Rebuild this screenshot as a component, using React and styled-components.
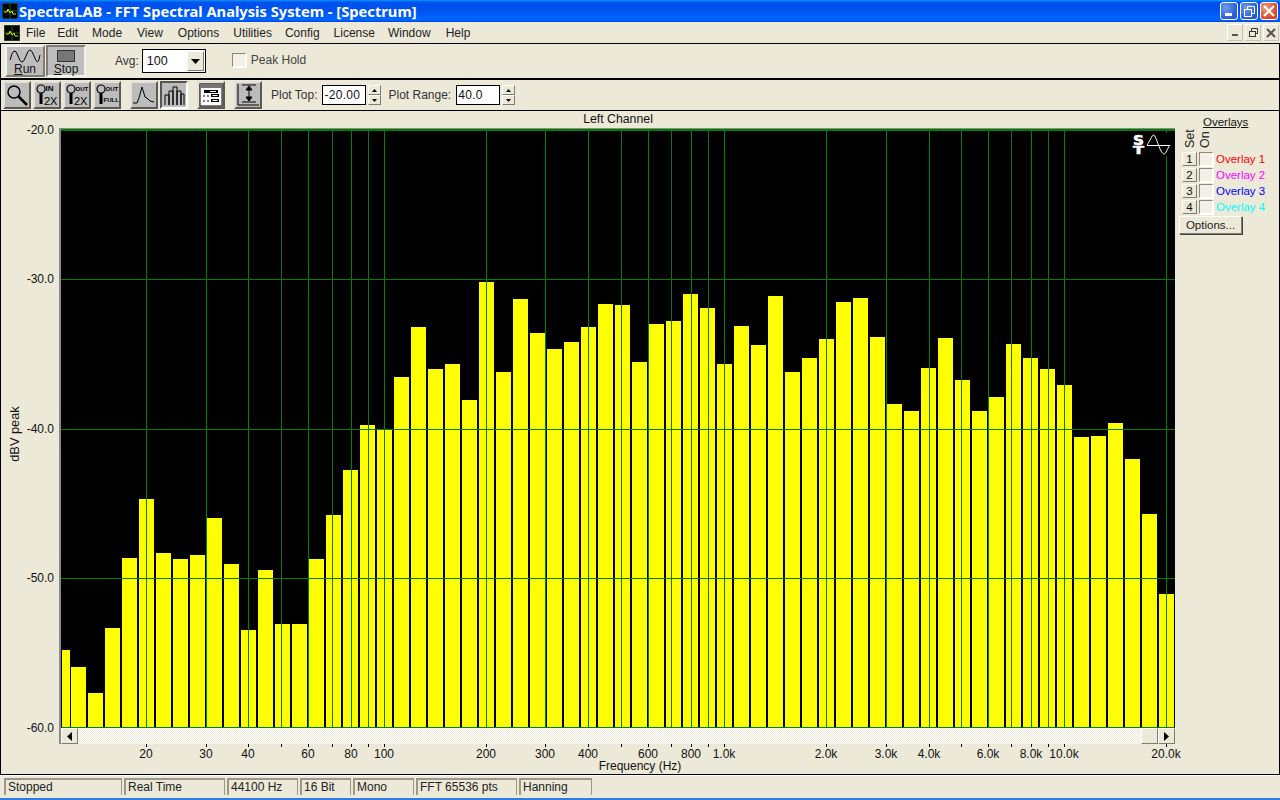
import React from 'react';
import styled, { createGlobalStyle } from 'styled-components';

const GlobalStyle = createGlobalStyle`
    html, body {
        margin: 0;
        padding: 0;
        width: 1280px;
        height: 800px;
        overflow: hidden;
        background: #ece9d8;
    }
    * {
        box-sizing: border-box;
    }
`;

const Window = styled.div`
    width: 1280px;
    height: 800px;
    display: flex;
    flex-direction: column;
    background: #ece9d8;
    font-family: "Liberation Sans", Arial, sans-serif;
    font-size: 12px;
    color: #000;
    overflow: hidden;
`;

const TitleBar = styled.div`
    height: 22px;
    flex: none;
    display: flex;
    align-items: center;
    padding: 0 2px;
    background: linear-gradient(180deg, #0997ff 0%, #0053ee 10%, #0050ee 40%, #0066ff 88%, #005bff 95%, #003dd7 100%);
`;

const TitleText = styled.div`
    flex: 1;
    margin-left: 1px;
    color: #fff;
    font-family: "Noto Sans", Verdana, sans-serif;
    font-weight: bold;
    font-size: 14.7px;
    white-space: nowrap;
`;

const CaptionButton = styled.div`
    width: 18px;
    height: 18px;
    margin-left: 2px;
    border: 1px solid #fff;
    border-radius: 3px;
    background: ${props => props.$close
        ? 'radial-gradient(circle at 30% 30%, #f0a080, #d8462a 70%)'
        : 'radial-gradient(circle at 30% 30%, #6f9cf0, #2a5ad8 70%)'};
    display: flex;
    align-items: center;
    justify-content: center;
`;

const MenuBar = styled.div`
    height: 21px;
    flex: none;
    display: flex;
    align-items: center;
    padding-left: 4px;
    border-bottom: 1px solid #000;
    box-sizing: content-box;
`;

const MenuItem = styled.span`
    margin-left: ${props => props.$gap}px;
    font-size: 12px;
    color: #222;
    white-space: nowrap;
`;

const MdiButtons = styled.div`
    margin-left: auto;
    display: flex;
    gap: 2px;
    padding-right: 1px;
`;

const MdiButton = styled.div`
    width: 16px;
    height: 17px;
    background: #ece9d8;
    border: 1px solid;
    border-color: #fff #c8c5b4 #c8c5b4 #fff;
    display: flex;
    align-items: center;
    justify-content: center;
`;

const ToolbarOne = styled.div`
    height: 34px;
    flex: none;
    display: flex;
    align-items: center;
    border-bottom: 2px solid #000;
    box-sizing: content-box;
    box-shadow: inset 1px 0 0 #000, inset -1px 0 0 #000;
    padding-left: 5px;
    font-size: 12px;
    color: #333;
`;

const RunButton = styled.div`
    width: 40px;
    height: 32px;
    margin-right: 1px;
    display: flex;
    flex-direction: column;
    align-items: center;
    background: #bdbdbd;
    border: 2px solid;
    border-color: ${props => props.$down
        ? '#7f7d73 #f4f2e8 #f4f2e8 #7f7d73'
        : '#f4f2e8 #7f7d73 #7f7d73 #f4f2e8'};
    color: #111;
    line-height: 12px;
    padding-top: 2px;
`;

const Underlined = styled.span`
    text-decoration: underline;
`;

const AvgLabel = styled.span`
    margin-left: 28px;
    margin-right: 3px;
`;

const ComboBox = styled.div`
    width: 64px;
    height: 24px;
    background: #fff;
    border: 1px solid #000;
    display: flex;
    align-items: center;
    justify-content: space-between;
    padding: 1px 1px 1px 4px;
    font-size: 12.5px;
    color: #111;
`;

const ComboArrow = styled.div`
    width: 17px;
    height: 20px;
    background: #ece9d8;
    border: 1px solid;
    border-color: #fff #7f7d73 #7f7d73 #fff;
    display: flex;
    align-items: center;
    justify-content: center;
`;

const CheckBox = styled.div`
    width: 14px;
    height: 14px;
    flex: none;
    background: #f3f1e7;
    border: 1px solid;
    border-color: #8a8878 #fff #fff #8a8878;
    box-shadow: 1px 1px 0 #fff;
`;

const PeakHold = styled.label`
    display: flex;
    align-items: center;
    gap: 5px;
    margin-left: 26px;
    margin-top: -2px;
    color: #444;
`;

const ToolbarTwo = styled.div`
    height: 30px;
    flex: none;
    display: flex;
    align-items: center;
    border-bottom: 1px solid #000;
    box-sizing: content-box;
    box-shadow: inset 1px 0 0 #000, inset -1px 0 0 #000;
    padding-left: 3px;
    color: #333;
    font-size: 12px;
`;

const IconButton = styled.div`
    width: 28px;
    height: 28px;
    margin-left: ${props => props.$gap || 0}px;
    flex: none;
    background: #bcbcbc;
    border: 2px solid;
    border-color: ${props => props.$down
        ? '#555 #fff #fff #555'
        : '#e4e2d8 #5c5a50 #5c5a50 #e4e2d8'};
    display: flex;
    align-items: center;
    justify-content: center;
`;

const FieldLabel = styled.span`
    margin-left: ${props => props.$gap}px;
    margin-right: 5px;
    white-space: nowrap;
`;

const NumberField = styled.div`
    width: 44px;
    height: 20px;
    background: #fff;
    border: 1px solid #000;
    display: flex;
    align-items: center;
    padding-left: 1px;
    font-size: 12px;
    letter-spacing: 0.3px;
    color: #111;
`;

const Spinner = styled.div`
    width: 13px;
    height: 20px;
    margin-left: 2px;
    display: flex;
    flex-direction: column;
`;

const SpinPart = styled.div`
    flex: 1;
    background: #ece9d8;
    border: 1px solid;
    border-color: #fff #7f7d73 #7f7d73 #fff;
    display: flex;
    align-items: center;
    justify-content: center;
`;

const Main = styled.div`
    flex: 1;
    min-height: 0;
    display: grid;
    grid-template-columns: 60px 1116px 1fr;
    grid-template-rows: 18px 599px 1fr;
    box-shadow: inset 1px 0 0 #000, inset -1px 0 0 #000;
`;

const ChannelTitle = styled.div`
    grid-column: 1 / 3;
    padding-left: 60px;
    text-align: center;
    font-size: 12.3px;
    line-height: 16px;
    color: #111;
`;

const YAxis = styled.div`
    grid-column: 1;
    grid-row: 2;
    position: relative;
`;

const YLabel = styled.span`
    position: absolute;
    right: 6px;
    top: ${props => props.$y - 7}px;
    font-size: 12px;
    line-height: 14px;
    color: #111;
`;

const YTitle = styled.span`
    position: absolute;
    left: 14px;
    top: 305px;
    transform: translate(-50%, -50%) rotate(-90deg);
    white-space: nowrap;
    font-size: 12.8px;
    color: #111;
`;

const PlotWrap = styled.div`
    grid-column: 2;
    grid-row: 2;
    position: relative;
    border-top: 1px solid #8a8a8a;
    border-left: 2px solid #8a8a8a;
    margin: -1px 1px 0 -1px;
    background: #000;
`;

const Plot = styled.svg`
    display: block;
`;

const SidePanel = styled.div`
    grid-column: 3;
    grid-row: 1 / 4;
    display: flex;
    flex-direction: column;
    position: relative;
    padding-left: 3px;
`;

const OverlaysTitle = styled.div`
    position: absolute;
    left: 27px;
    top: 5px;
    font-size: 11.5px;
    text-decoration: underline;
    color: #111;
`;

const SetOnHead = styled.div`
    height: 29px;
    margin: 8px 0 3px 4px;
    display: flex;
`;

const VerticalText = styled.span`
    width: 15px;
    writing-mode: vertical-rl;
    transform: rotate(180deg);
    font-size: 12.5px;
    line-height: 15px;
    text-align: left;
    color: #222;
`;

const OverlayRow = styled.div`
    height: 16px;
    display: flex;
    align-items: center;
    padding-left: 3px;
    font-size: 11.5px;
    color: ${props => props.$color};
    white-space: nowrap;
`;

const SetButton = styled.div`
    width: 15px;
    height: 14px;
    flex: none;
    margin-right: 2px;
    background: #ece9d8;
    border: 1px solid;
    border-color: #fff #7f7d73 #7f7d73 #fff;
    font-size: 11.5px;
    line-height: 12px;
    text-align: center;
    color: #111;
`;

const OverlayName = styled.span`
    margin-left: 3px;
`;

const OptionsButton = styled.div`
    width: 63px;
    height: 18px;
    margin-top: 1px;
    background: #ece9d8;
    border: 1px solid;
    border-color: #fff #7f7d73 #7f7d73 #fff;
    box-shadow: 1px 1px 0 #444;
    font-size: 11.5px;
    line-height: 16px;
    text-align: center;
    color: #222;
`;

const XAxis = styled.div`
    grid-column: 1 / 3;
    grid-row: 3;
    position: relative;
`;

const ScrollRow = styled.div`
    position: absolute;
    left: 59px;
    top: 0;
    width: 1116px;
    height: 16px;
    display: flex;
    background-color: #f4f2ea;
    background-image: repeating-conic-gradient(#ece9d8 0 25%, #fff 0 50%);
    background-size: 2px 2px;
    border-left: 2px solid #8a8a8a;
`;

const ScrollButton = styled.div`
    width: 17px;
    height: 16px;
    margin-left: ${props => props.$auto ? 'auto' : '0'};
    background: #ece9d8;
    border: 1px solid;
    border-color: #fff #7f7d73 #7f7d73 #fff;
    display: flex;
    align-items: center;
    justify-content: center;
`;

const Tick = styled.i`
    position: absolute;
    left: ${props => props.$x}px;
    top: 16px;
    width: 1px;
    height: 3px;
    background: #000;
`;

const XLabel = styled.span`
    position: absolute;
    left: ${props => props.$x}px;
    top: 20px;
    transform: translateX(-50%);
    font-size: 12px;
    line-height: 12px;
    color: #111;
    white-space: nowrap;
`;

const XTitle = styled.span`
    position: absolute;
    left: 640px;
    top: 32px;
    transform: translateX(-50%);
    font-size: 12px;
    line-height: 12px;
    color: #111;
`;

const StatusBar = styled.div`
    height: 24px;
    flex: none;
    display: flex;
    align-items: flex-start;
    gap: 2px;
    border-top: 1px solid #000;
    box-shadow: inset 0 1px 0 #fff;
    padding: 3px 0 0 4px;
`;

const StatusCell = styled.div`
    width: ${props => props.$w}px;
    height: 17px;
    padding-left: 2px;
    border-style: solid;
    border-color: #9a9888;
    border-width: 2px 1px 0 2px;
    font-size: 12px;
    line-height: 14px;
    color: #222;
    white-space: nowrap;
`;

const BottomEdge = styled.div`
    height: 2px;
    flex: none;
    background: #2f7be0;
`;

const menus = [
    ['File', 6], ['Edit', 12], ['Mode', 14], ['View', 15], ['Options', 15],
    ['Utilities', 14], ['Config', 13], ['License', 14], ['Window', 13], ['Help', 15],
];

const barTops = [
    650, 667, 693, 628, 558, 499, 553, 559, 555, 518, 564, 630, 570, 624, 624, 559, 515,
    470, 425, 430, 377, 327, 369, 364, 400, 282, 372, 299, 333, 349, 342, 327, 304, 305,
    362, 324, 321, 294, 308, 364, 326, 345, 296, 372, 358, 339, 302, 298, 337, 404, 411,
    368, 338, 380, 411, 397, 344, 358, 369, 385, 437, 436, 423, 459, 514, 594,
];

const greenLines = [146, 206, 248, 308, 351, 384, 486, 545, 588, 648, 691, 724, 826, 886, 929, 988, 1031, 1064, 1166];
const minorLines = [281, 332, 368, 621, 671, 708, 961, 1011, 1048];
const gridRows = [279, 429, 578];

const xLabels = [
    ['20', 146], ['30', 206], ['40', 248], ['60', 308], ['80', 351], ['100', 384],
    ['200', 486], ['300', 545], ['400', 588], ['600', 648], ['800', 691], ['1.0k', 724],
    ['2.0k', 826], ['3.0k', 886], ['4.0k', 929], ['6.0k', 988], ['8.0k', 1031], ['10.0k', 1064], ['20.0k', 1166],
];

const overlays = [
    ['1', 'Overlay 1', '#ff0000'],
    ['2', 'Overlay 2', '#ff00ff'],
    ['3', 'Overlay 3', '#0000ff'],
    ['4', 'Overlay 4', '#00ffff'],
];

const statusCells = [
    ['Stopped', 118], ['Real Time', 101], ['44100 Hz', 71], ['16 Bit', 51],
    ['Mono', 61], ['FFT 65536 pts', 101], ['Hanning', 73],
];

// plot svg coordinates start at page x=61, y=129
const PX = 61;
const PY = 129;
const PLOT_W = 1114;
const PLOT_H = 599;

const AppIcon = () => (
    <svg width="16" height="16" viewBox="0 0 16 16">
        <rect width="16" height="16" fill="#000" stroke="#4a7a30" />
        <path d="M1 8H15M8 1V15" stroke="#0a6a0a" />
        <path d="M2 9h3l1-3 2 4 2-2 1 3h3" stroke="#f0e000" fill="none" />
    </svg>
);

const SpectrumPlot = () => (
    <Plot width={PLOT_W} height={PLOT_H} viewBox={`0 0 ${PLOT_W} ${PLOT_H}`} shapeRendering="crispEdges">
        {barTops.map((top, i) => {
            const x = i === 0 ? 1 : 10 + (i - 1) * 17;
            const w = i === 0 ? 8 : 15;
            return <rect key={i} x={x} y={top - PY} width={w} height={PLOT_H - (top - PY)} fill="#ffff00" />;
        })}
        {greenLines.map(x => (
            <rect key={x} x={x - PX} y="0" width="1" height={PLOT_H} fill="#008000" />
        ))}
        {minorLines.map(x => (
            <rect key={x} x={x - PX} y="0" width="1" height={PLOT_H} fill="#1a6e1a" />
        ))}
        {gridRows.map(y => (
            <rect key={y} x="0" y={y - PY} width={PLOT_W} height="1" fill="#008000" />
        ))}
        <rect x="0" y="0" width={PLOT_W} height="2" fill="#008000" />
        <rect x="0" y={PLOT_H - 1} width={PLOT_W} height="1" fill="#008000" />
        <rect x="1070" y="4" width="42" height="23" fill="#000" />
        <text x="1072" y="16" fontSize="13.500" fontWeight="bold" fontFamily="DejaVu Sans" textLength="11" lengthAdjust="spacingAndGlyphs" fill="#fff" stroke="#fff" strokeWidth="0.5">S</text>
        <text x="1072" y="25" fontSize="10" fontWeight="bold" fontFamily="DejaVu Sans" textLength="11" lengthAdjust="spacingAndGlyphs" fill="#fff" stroke="#fff" strokeWidth="0.5">T</text>
        <path d="M1086 16h23" stroke="#fff" />
        <path d="M1086 16C1089 12 1091 6 1092.500 6S1096 12 1097.500 16 1101 25 1103 25 1106 20 1109 16" fill="none" stroke="#fff" shapeRendering="auto" />
    </Plot>
);

const MagnifierIcon = ({ top, bottom }) => (
    <svg width="24" height="24" viewBox="0 0 24 24" fill="none" stroke="#000">
        <circle cx="6" cy="6" r="4" strokeWidth="1.2" />
        <path d="M6 10v11" strokeWidth="3" />
        <text x="10.500" y="8" fontSize={top === 'IN' ? 8 : 6} fontWeight="bold" fontFamily="Liberation Sans" fill="#000" stroke="none">{top}</text>
        {bottom === 'FULL'
            ? <text x="8.500" y="19" fontSize="6" fontWeight="bold" fontFamily="Liberation Sans" fill="#000" stroke="none">FULL</text>
            : <text x="9" y="22" fontSize="11" fontFamily="Liberation Sans" fill="#000" stroke="none">{bottom}</text>}
    </svg>
);

const App = () => {
    return (
        <Window>
            <GlobalStyle />
            <TitleBar>
                <AppIcon />
                <TitleText>SpectraLAB - FFT Spectral Analysis System - [Spectrum]</TitleText>
                <CaptionButton>
                    <svg width="11" height="11"><rect x="1" y="7" width="7" height="3" fill="#fff" /></svg>
                </CaptionButton>
                <CaptionButton>
                    <svg width="13" height="13" fill="none" stroke="#fff"><rect x="1.500" y="4.500" width="7" height="7" /><path d="M4.500 4V1.500h7v7H9" /></svg>
                </CaptionButton>
                <CaptionButton $close>
                    <svg width="12" height="12" stroke="#fff" strokeWidth="2"><path d="M1 1l10 10M11 1L1 11" /></svg>
                </CaptionButton>
            </TitleBar>
            <MenuBar>
                <AppIcon />
                {menus.map(([name, gap]) => (
                    <MenuItem key={name} $gap={gap}>{name}</MenuItem>
                ))}
                <MdiButtons>
                    <MdiButton>
                        <svg width="9" height="9"><rect x="1" y="6" width="6" height="2" fill="#555" /></svg>
                    </MdiButton>
                    <MdiButton>
                        <svg width="11" height="11" fill="none" stroke="#333"><rect x="1.500" y="4.500" width="6" height="5" /><path d="M3.500 4V1.500h6v5H8" /></svg>
                    </MdiButton>
                    <MdiButton>
                        <svg width="10" height="10" stroke="#555" strokeWidth="2"><path d="M1 1l8 8M9 1L1 9" /></svg>
                    </MdiButton>
                </MdiButtons>
            </MenuBar>
            <ToolbarOne>
                <RunButton>
                    <svg width="32" height="14" viewBox="0 0 32 14" fill="none" stroke="#000"><path d="M1 11Q5 -5 9 7T17 7T25 7T31 6" /></svg>
                    <span><Underlined>R</Underlined>un</span>
                </RunButton>
                <RunButton $down>
                    <svg width="20" height="14" viewBox="0 0 20 14"><rect x="1.500" y="1.500" width="17" height="11" fill="#777" stroke="#333" /></svg>
                    <span><Underlined>S</Underlined>top</span>
                </RunButton>
                <AvgLabel>Avg:</AvgLabel>
                <ComboBox>
                    100
                    <ComboArrow>
                        <svg width="9" height="5"><path d="M0 0h9L4.500 5z" fill="#000" /></svg>
                    </ComboArrow>
                </ComboBox>
                <PeakHold>
                    <CheckBox />
                    Peak Hold
                </PeakHold>
            </ToolbarOne>
            <ToolbarTwo>
                <IconButton>
                    <svg width="24" height="24" viewBox="0 0 24 24" fill="none" stroke="#000"><circle cx="9" cy="9" r="6" strokeWidth="1.500" /><path d="M13.500 13.500L22 22" strokeWidth="2.500" /></svg>
                </IconButton>
                <IconButton $gap={2}><MagnifierIcon top="IN" bottom="2X" /></IconButton>
                <IconButton $gap={2}><MagnifierIcon top="OUT" bottom="2X" /></IconButton>
                <IconButton $gap={2}><MagnifierIcon top="OUT" bottom="FULL" /></IconButton>
                <IconButton $gap={9}>
                    <svg width="24" height="24" viewBox="0 0 24 24" fill="none" stroke="#000"><path d="M1 20h4l2-5 3-11 3 10 3 2 2 2 4 1" /></svg>
                </IconButton>
                <IconButton $gap={2} $down>
                    <svg width="24" height="24" viewBox="0 0 24 24" fill="none" stroke="#000"><path d="M3 22V12h4v10M7 22V8h4v14M11 22V4h4v18M15 22V8h4v14M19 22V11h3v11" /></svg>
                </IconButton>
                <IconButton $gap={9}>
                    <svg width="24" height="24" viewBox="0 0 24 24"><rect x="1" y="1" width="22" height="22" fill="#fff" stroke="#000" /><rect x="1" y="1" width="22" height="4" fill="#777" /><path d="M5 8.500h14M12 12.500h8M12 17.500h8" stroke="#000" strokeWidth="3" /><path d="M11 8.500h6M13.500 12.500h5M13.500 17.500h5" stroke="#fff" /><path d="M4 13h2M8 13h2M4 18h2M8 18h2" stroke="#000" /></svg>
                </IconButton>
                <IconButton $gap={9}>
                    <svg width="24" height="24" viewBox="0 0 24 24" fill="none" stroke="#000"><path d="M2 1v21h21" /><path d="M6 2h14M6 19h14M13 3v15" /><path d="M10 7h6l-3-4zM10 14h6l-3 4z" fill="#000" /></svg>
                </IconButton>
                <FieldLabel $gap={9}>Plot Top:</FieldLabel>
                <NumberField>-20.00</NumberField>
                <Spinner>
                    <SpinPart><svg width="5" height="3"><path d="M0 3h5L2.500 0z" fill="#000" /></svg></SpinPart>
                    <SpinPart><svg width="5" height="3"><path d="M0 0h5L2.500 3z" fill="#000" /></svg></SpinPart>
                </Spinner>
                <FieldLabel $gap={7}>Plot Range:</FieldLabel>
                <NumberField>40.0</NumberField>
                <Spinner>
                    <SpinPart><svg width="5" height="3"><path d="M0 3h5L2.500 0z" fill="#000" /></svg></SpinPart>
                    <SpinPart><svg width="5" height="3"><path d="M0 0h5L2.500 3z" fill="#000" /></svg></SpinPart>
                </Spinner>
            </ToolbarTwo>
            <Main>
                <ChannelTitle>Left Channel</ChannelTitle>
                <YAxis>
                    <YLabel $y={1}>-20.0</YLabel>
                    <YLabel $y={150}>-30.0</YLabel>
                    <YLabel $y={300}>-40.0</YLabel>
                    <YLabel $y={449}>-50.0</YLabel>
                    <YLabel $y={599}>-60.0</YLabel>
                    <YTitle>dBV peak</YTitle>
                </YAxis>
                <PlotWrap>
                    <SpectrumPlot />
                </PlotWrap>
                <XAxis>
                    <ScrollRow>
                        <ScrollButton>
                            <svg width="5" height="9"><path d="M5 0v9L0 4.500z" fill="#000" /></svg>
                        </ScrollButton>
                        <ScrollButton $auto />
                        <ScrollButton>
                            <svg width="5" height="9"><path d="M0 0v9l5-4.500z" fill="#000" /></svg>
                        </ScrollButton>
                    </ScrollRow>
                    {greenLines.concat(minorLines).map(x => <Tick key={x} $x={x} />)}
                    {xLabels.map(([label, x]) => <XLabel key={label} $x={x}>{label}</XLabel>)}
                    <XTitle>Frequency (Hz)</XTitle>
                </XAxis>
                <SidePanel>
                    <OverlaysTitle>Overlays</OverlaysTitle>
                    <SetOnHead>
                        <VerticalText>Set</VerticalText>
                        <VerticalText>On</VerticalText>
                    </SetOnHead>
                    {overlays.map(([num, name, color]) => (
                        <OverlayRow key={num} $color={color}>
                            <SetButton>{num}</SetButton>
                            <CheckBox />
                            <OverlayName>{name}</OverlayName>
                        </OverlayRow>
                    ))}
                    <OptionsButton>Options...</OptionsButton>
                </SidePanel>
            </Main>
            <StatusBar>
                {statusCells.map(([text, w]) => (
                    <StatusCell key={text} $w={w}>{text}</StatusCell>
                ))}
            </StatusBar>
            <BottomEdge />
        </Window>
    );
};

export default App;
